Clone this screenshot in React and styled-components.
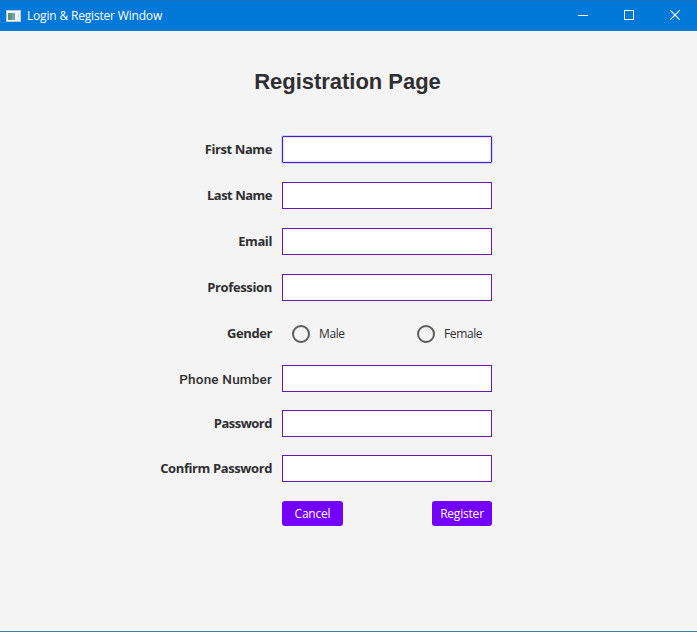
import React from 'react';
import styled, { createGlobalStyle } from 'styled-components';

const GlobalStyle = createGlobalStyle`
  * { box-sizing: border-box; }
  body { margin: 0; overflow: hidden; background: #f4f4f4; }
`;

const Window = styled.div`
  width: 697px;
  height: 632px;
  display: flex;
  flex-direction: column;
  background: #f4f4f4;
  border-bottom: 1px solid #3a7fb0;
  color: #2f2f31;
  font-family: 'Open Sans', 'Noto Sans', sans-serif;
`;

const TitleBar = styled.header`
  height: 31px;
  flex: none;
  display: flex;
  align-items: center;
  padding-left: 6px;
  background: #0078d7;
  border-top: 1px solid #1a70b8;
  color: #fff;
`;

const WindowTitle = styled.span`
  flex: 1;
  margin-left: 6px;
  font-size: 12px;
  line-height: 16px;
  letter-spacing: -0.18px;
`;

const WindowControls = styled.div`
  display: flex;
  margin-right: -1px;
`;

const WindowControl = styled.span`
  width: 46px;
  height: 30px;
  display: flex;
  align-items: center;
  justify-content: center;
  padding-bottom: 2px;
`;

const Heading = styled.h1`
  margin: 36px 0 0;
  padding-right: 2px;
  height: 30px;
  text-align: center;
  font: bold 22px/30px 'Liberation Sans', sans-serif;
  letter-spacing: -0.03px;
`;

const Form = styled.form`
  margin: 39px 0 0 150px;
  width: 342px;
  display: grid;
  grid-template-columns: 122px 210px;
  grid-template-rows: 27px 27px 27px 27px 26px 27px 27px 27px 25px;
  column-gap: 10px;
  row-gap: 19px;
`;

const Label = styled.label`
  height: 27px;
  text-align: right;
  white-space: nowrap;
  font-family: ${(p) => (p.$alt ? 'Roboto, sans-serif' : "'Open Sans', sans-serif")};
  font-size: ${(p) => (p.$alt ? 13.5 : 13)}px;
  line-height: ${(p) => (p.$alt ? 29 : 27)}px;
  font-weight: ${(p) => (p.$alt ? 500 : 700)};
  letter-spacing: ${(p) => p.$spacing || 0}px;
  margin-top: ${(p) => p.$shift || 0}px;
`;

const Input = styled.input`
  width: 210px;
  height: 27px;
  margin: ${(p) => p.$shift || 0}px 0 0;
  padding: 0 8px;
  border: 1px solid ${(p) => (p.$active ? '#4f20bc' : '#6a16b0')};
  border-radius: ${(p) => (p.$active ? 1 : 0)}px;
  background: #fff;
  outline: none;
  font: 12px 'Open Sans', sans-serif;
  box-shadow: ${(p) => (p.$active ? '0 0 0 1px #cbd5fa, inset 0 0 1px 1px #dfe2ff' : 'none')};
`;

const RadioGroup = styled.div`
  display: flex;
  align-items: center;
  padding: 2px 0 0 10px;
`;

const RadioOption = styled.label`
  width: 125px;
  flex: none;
  display: flex;
  align-items: center;
  gap: 9px;
  font-size: 12px;
  line-height: 18px;
  letter-spacing: -0.38px;
`;

const RadioMark = styled.span`
  width: 18px;
  height: 18px;
  border: 2px solid #5c5c5c;
  border-radius: 50%;
`;

const Actions = styled.div`
  grid-column: 2;
  display: flex;
  justify-content: space-between;
  margin-top: -2px;
  height: 25px;
`;

const Button = styled.button`
  width: ${(p) => p.$width}px;
  height: 25px;
  padding: 0;
  border: 0;
  border-radius: 3px;
  background: #7300ff;
  color: #fff;
  font: 12px/25px 'Open Sans', sans-serif;
  letter-spacing: -0.2px;
`;

const fieldsTop = [
  { label: 'First Name', id: 'first', active: true, spacing: -0.4 },
  { label: 'Last Name', id: 'last', spacing: -0.5 },
  { label: 'Email', id: 'email', spacing: -0.4 },
  { label: 'Profession', id: 'profession', spacing: -0.35 },
];

const fieldsBottom = [
  { label: 'Phone Number', id: 'phone', alt: true, shift: 0, spacing: 0.2 },
  { label: 'Password', id: 'password', shift: -1, spacing: -0.5 },
  { label: 'Confirm Password', id: 'confirm', shift: -2, spacing: -0.4 },
];

function Field({ label, id, active, alt, shift, spacing }) {
  return (
    <>
      <Label htmlFor={id} $alt={alt} $shift={shift} $spacing={spacing}>{label}</Label>
      <Input id={id} $active={active} $shift={shift} />
    </>
  );
}

function AppIcon() {
  return (
    <svg width="15" height="12" viewBox="0 0 15 12" shapeRendering="crispEdges">
      <rect width="15" height="12" fill="#b9cbd9" />
      <rect x="1" y="1" width="13" height="10" fill="#f3f5f3" />
      <rect x="2" y="3" width="5" height="7" fill="#5d927f" />
      <rect x="6" y="3" width="3" height="7" fill="#7ba0ae" />
      <rect x="12" y="3" width="1" height="4" fill="#d5dccf" />
    </svg>
  );
}

export default function App() {
  return (
    <Window>
      <GlobalStyle />
      <TitleBar>
        <AppIcon />
        <WindowTitle>Login &amp; Register Window</WindowTitle>
        <WindowControls>
          <WindowControl>
            <svg width="10" height="10"><path d="M0 5.5H10" stroke="#fff" /></svg>
          </WindowControl>
          <WindowControl>
            <svg width="10" height="10"><rect x=".5" y=".5" width="9" height="9" fill="none" stroke="#fff" /></svg>
          </WindowControl>
          <WindowControl>
            <svg width="10" height="10"><path d="M.2 .2L9.8 9.8M9.8 .2L.2 9.8" stroke="#fff" strokeWidth="1.2" /></svg>
          </WindowControl>
        </WindowControls>
      </TitleBar>
      <Heading>Registration Page</Heading>
      <Form>
        {fieldsTop.map((f) => <Field key={f.id} {...f} />)}
        <Label as="span" $spacing={-0.4}>Gender</Label>
        <RadioGroup>
          <RadioOption><RadioMark />Male</RadioOption>
          <RadioOption><RadioMark />Female</RadioOption>
        </RadioGroup>
        {fieldsBottom.map((f) => <Field key={f.id} {...f} />)}
        <Actions>
          <Button type="button" $width={61}>Cancel</Button>
          <Button type="button" $width={60}>Register</Button>
        </Actions>
      </Form>
    </Window>
  );
}
